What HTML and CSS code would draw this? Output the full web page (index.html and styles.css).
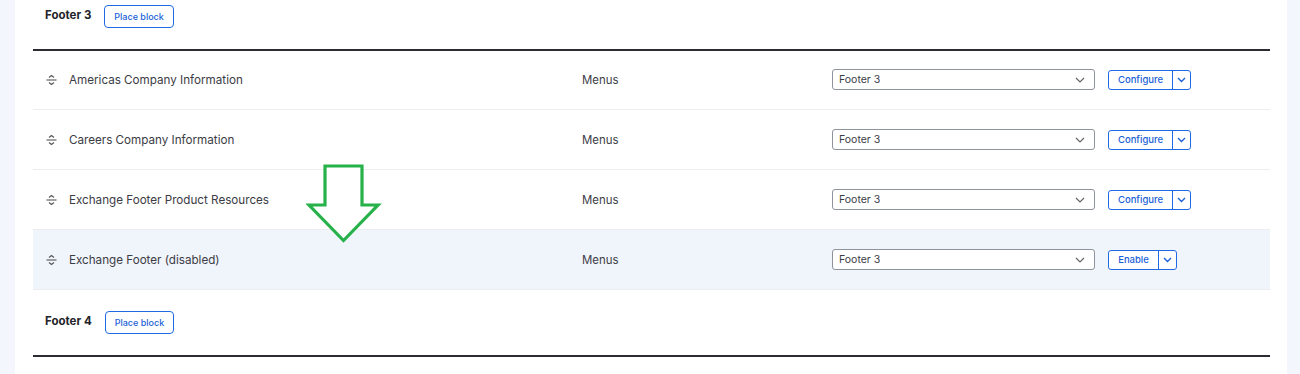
FILE: index.html
```html
<!DOCTYPE html>
<html lang="en">
<head>
<meta charset="utf-8">
<title>Block layout</title>
<link rel="stylesheet" href="styles.css">
</head>
<body>
<div class="panel">
  <div class="region-head">
    <span class="region-title">Footer 3</span>
    <button class="btn-place">Place block</button>
  </div>
  <div class="table">
    <div class="row">
      <div class="cell title"><span class="handle"><svg width="11" height="12" viewBox="0 0 11 12"><path d="M3 3.5 L5.5 1.5 L8 3.5" fill="none" stroke="#555" stroke-width="1.1"/><path d="M0.5 6 H10.5" stroke="#555" stroke-width="1.1"/><path d="M3 8.5 L5.5 10.5 L8 8.5" fill="none" stroke="#555" stroke-width="1.1"/></svg></span>Americas Company Information</div>
      <div class="cell cat">Menus</div>
      <div class="cell"><div class="select">Footer 3<svg class="chev" width="10" height="6" viewBox="0 0 10 6"><path d="M1 1 L5 5 L9 1" fill="none" stroke="#666" stroke-width="1.2"/></svg></div></div>
      <div class="cell"><div class="split"><span class="main">Configure</span><span class="drop"><svg width="9" height="6" viewBox="0 0 9 6"><path d="M1 1 L4.5 4.5 L8 1" fill="none" stroke="#1b5fd8" stroke-width="1.4"/></svg></span></div></div>
    </div>
    <div class="row">
      <div class="cell title"><span class="handle"><svg width="11" height="12" viewBox="0 0 11 12"><path d="M3 3.5 L5.5 1.5 L8 3.5" fill="none" stroke="#555" stroke-width="1.1"/><path d="M0.5 6 H10.5" stroke="#555" stroke-width="1.1"/><path d="M3 8.5 L5.5 10.5 L8 8.5" fill="none" stroke="#555" stroke-width="1.1"/></svg></span>Careers Company Information</div>
      <div class="cell cat">Menus</div>
      <div class="cell"><div class="select">Footer 3<svg class="chev" width="10" height="6" viewBox="0 0 10 6"><path d="M1 1 L5 5 L9 1" fill="none" stroke="#666" stroke-width="1.2"/></svg></div></div>
      <div class="cell"><div class="split"><span class="main">Configure</span><span class="drop"><svg width="9" height="6" viewBox="0 0 9 6"><path d="M1 1 L4.5 4.5 L8 1" fill="none" stroke="#1b5fd8" stroke-width="1.4"/></svg></span></div></div>
    </div>
    <div class="row">
      <div class="cell title"><span class="handle"><svg width="11" height="12" viewBox="0 0 11 12"><path d="M3 3.5 L5.5 1.5 L8 3.5" fill="none" stroke="#555" stroke-width="1.1"/><path d="M0.5 6 H10.5" stroke="#555" stroke-width="1.1"/><path d="M3 8.5 L5.5 10.5 L8 8.5" fill="none" stroke="#555" stroke-width="1.1"/></svg></span>Exchange Footer Product Resources</div>
      <div class="cell cat">Menus</div>
      <div class="cell"><div class="select">Footer 3<svg class="chev" width="10" height="6" viewBox="0 0 10 6"><path d="M1 1 L5 5 L9 1" fill="none" stroke="#666" stroke-width="1.2"/></svg></div></div>
      <div class="cell"><div class="split"><span class="main">Configure</span><span class="drop"><svg width="9" height="6" viewBox="0 0 9 6"><path d="M1 1 L4.5 4.5 L8 1" fill="none" stroke="#1b5fd8" stroke-width="1.4"/></svg></span></div></div>
    </div>
    <div class="row disabled">
      <div class="cell title"><span class="handle"><svg width="11" height="12" viewBox="0 0 11 12"><path d="M3 3.5 L5.5 1.5 L8 3.5" fill="none" stroke="#555" stroke-width="1.1"/><path d="M0.5 6 H10.5" stroke="#555" stroke-width="1.1"/><path d="M3 8.5 L5.5 10.5 L8 8.5" fill="none" stroke="#555" stroke-width="1.1"/></svg></span>Exchange Footer (disabled)</div>
      <div class="cell cat">Menus</div>
      <div class="cell"><div class="select">Footer 3<svg class="chev" width="10" height="6" viewBox="0 0 10 6"><path d="M1 1 L5 5 L9 1" fill="none" stroke="#666" stroke-width="1.2"/></svg></div></div>
      <div class="cell"><div class="split enable"><span class="main">Enable</span><span class="drop"><svg width="9" height="6" viewBox="0 0 9 6"><path d="M1 1 L4.5 4.5 L8 1" fill="none" stroke="#1b5fd8" stroke-width="1.4"/></svg></span></div></div>
    </div>
  </div>
  <div class="region-head second">
    <span class="region-title">Footer 4</span>
    <button class="btn-place">Place block</button>
  </div>
  <div class="table-top"></div>
  <svg class="arrow" width="80" height="84" viewBox="0 0 80 84"><polygon points="19,2 56,2 56,41 72,41 37.5,76.5 3,41 19,41" fill="#ffffff" stroke="#27b14a" stroke-width="3.2" stroke-linejoin="miter"/></svg>
</div>
</body>
</html>
```
FILE: styles.css
```css
html, body {
  margin: 0;
  padding: 0;
}
body {
  background: #f3f6fc;
  font-family: Inter, "Noto Sans", sans-serif;
  color: #3a3a44;
  height: 374px;
  overflow: hidden;
}
.panel {
  position: relative;
  margin-left: 15px;
  width: 1272px;
  min-height: 374px;
  box-sizing: border-box;
  background: #ffffff;
  padding: 0 17px 0 18px;
}
.region-head {
  height: 49px;
  box-sizing: border-box;
  padding: 5px 0 0 12px;
  display: flex;
  align-items: flex-start;
  gap: 13px;
}
.region-head.second {
  height: 65px;
  padding-top: 21px;
}
.region-title {
  font-size: 11.5px;
  font-weight: 700;
  color: #232329;
  line-height: 23px;
  margin-top: -1px;
}
.btn-place {
  height: 23px;
  box-sizing: border-box;
  border: 1.5px solid #1f6ae4;
  border-radius: 4px;
  background: #fff;
  color: #1b5fd8;
  font-family: Inter, "Noto Sans", sans-serif;
  font-size: 9px;
  font-weight: 500;
  padding: 0 9px;
}
.table {
  border-top: 2px solid #2b2b33;
}
.table-top {
  border-top: 2px solid #2b2b33;
}
.row {
  display: grid;
  grid-template-columns: 537px 250px 276px 1fr;
  height: 60px;
  box-sizing: border-box;
  border-bottom: 1px solid #ececf1;
  align-items: center;
}
.row:first-child {
  height: 59px;
  padding-bottom: 1px;
}
.row.disabled {
  background: #f0f4fb;
}
.cell {
  padding-left: 12px;
  display: flex;
  align-items: center;
}
.cell.title {
  padding-left: 13px;
  font-size: 11.65px;
  color: #3c3c45;
}
.handle {
  display: inline-flex;
  width: 11px;
  margin-right: 12px;
}
.cat {
  font-size: 11.4px;
  color: #3c3c45;
}
.select {
  width: 263px;
  height: 21px;
  box-sizing: border-box;
  border: 1px solid #8f939c;
  border-radius: 3px;
  background: #fff;
  font-size: 10.5px;
  color: #3c3c45;
  display: flex;
  align-items: center;
  padding: 0 9px 0 6px;
  justify-content: space-between;
}
.split {
  display: flex;
  height: 20px;
  box-sizing: border-box;
  border: 1.6px solid #1f6ae4;
  border-radius: 3px;
  background: #fff;
  color: #1b5fd8;
  font-size: 9.5px;
  font-weight: 500;
}
.split .main {
  width: 63px;
  display: flex;
  align-items: center;
  justify-content: center;
  border-right: 1px solid #1f6ae4;
}
.split.enable .main {
  width: 49px;
}
.split .drop {
  width: 17px;
  display: flex;
  align-items: center;
  justify-content: center;
}
.arrow {
  position: absolute;
  left: 291px;
  top: 164px;
}
```
